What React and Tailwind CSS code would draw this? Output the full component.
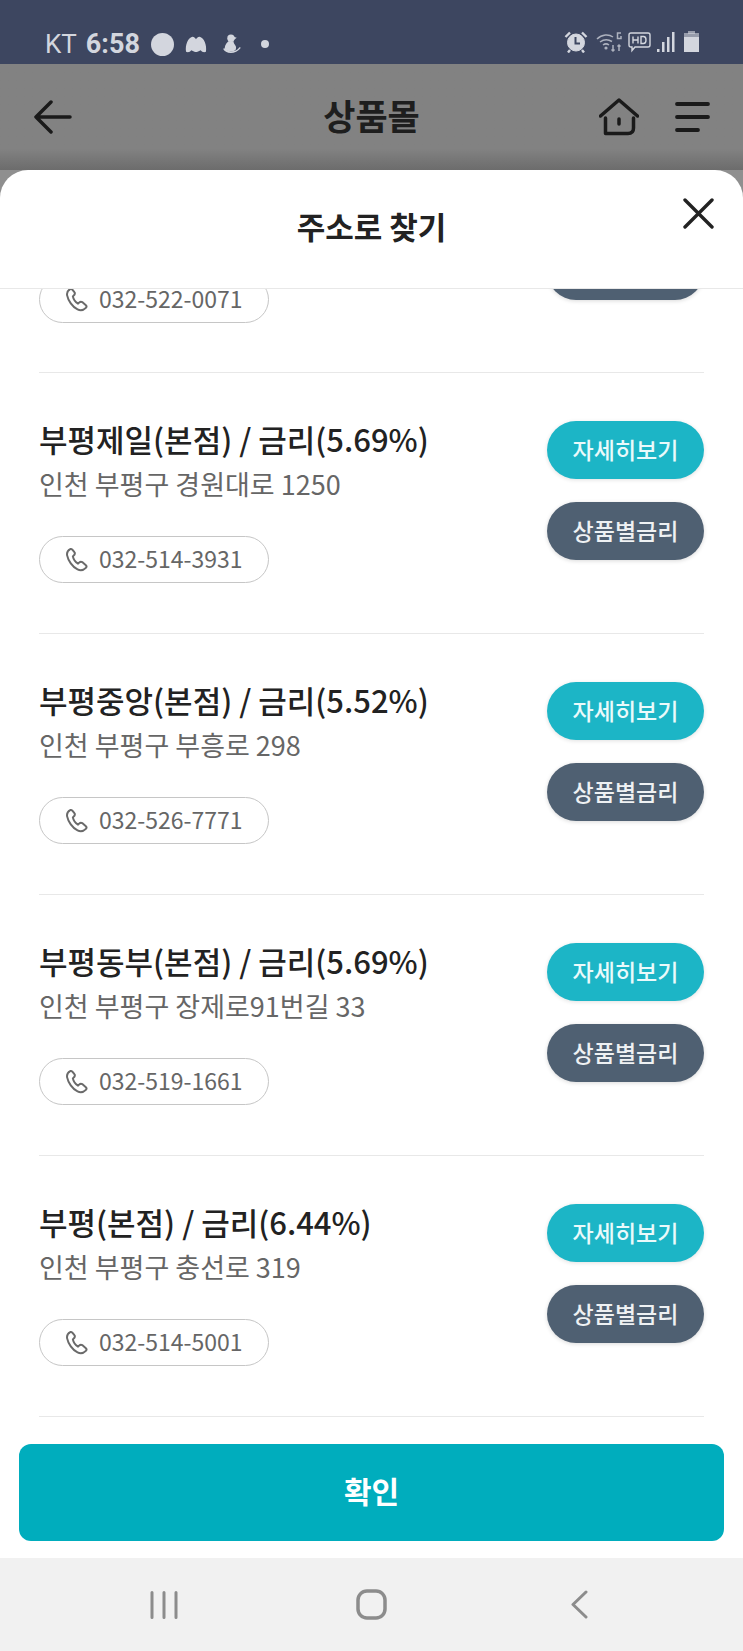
const branches = [
  { title: '부평제일(본점) / 금리(5.69%)', address: '인천 부평구 경원대로 1250', phone: '032-514-3931' },
  { title: '부평중앙(본점) / 금리(5.52%)', address: '인천 부평구 부흥로 298', phone: '032-526-7771' },
  { title: '부평동부(본점) / 금리(5.69%)', address: '인천 부평구 장제로91번길 33', phone: '032-519-1661' },
  { title: '부평(본점) / 금리(6.44%)', address: '인천 부평구 충선로 319', phone: '032-514-5001' },
];

function PhoneIcon() {
  return (
    <svg width="25" height="25" viewBox="0 0 24 24" fill="none" stroke="#6a6a6a" strokeWidth="1.900" strokeLinejoin="round" className="shrink-0">
      <path d="M6 2C4 3 2.500 5 3 8C4 13 8 19 13 21.500C16 23 19 22 21 20C22 19 21.500 18 21 17.500L17.500 14.500C16.500 13.800 15.500 14 14.500 15L13.500 16C11 14.500 9 11.500 8.500 9L10 7.500C10.500 6.500 10.500 5.500 10 5L8 2.500C7.500 2 6.800 1.800 6 2Z" />
    </svg>
  );
}

function PhonePill({ phone }) {
  return (
    <div className="flex h-[47px] w-[230px] items-center gap-[10px] rounded-full border border-[#c6c6c6] pl-[24px] text-[#666666]">
      <PhoneIcon />
      <span className="pb-[3px] text-[23px]">{phone}</span>
    </div>
  );
}

function DarkButton() {
  return (
    <button className="flex h-[58px] w-[157px] items-center justify-center rounded-full bg-[#4f6072] pb-[2px] text-[23px] font-medium text-[#eef1f3] shadow-[0_1px_4px_rgba(0,0,0,0.15)]">
      상품별금리
    </button>
  );
}

function BranchRow({ branch }) {
  return (
    <div className="mx-[39px] flex h-[261px] justify-between border-b border-[#e8e8e8] pt-[48px]">
      <div className="flex flex-col">
        <h3 className="-mt-[2px] h-[40px] text-[31px] leading-[40px] font-medium text-[#222222]">{branch.title}</h3>
        <p className="mt-[7px] text-[27px] leading-[36px] text-[#666666]">{branch.address}</p>
        <div className="mt-[34px]">
          <PhonePill phone={branch.phone} />
        </div>
      </div>
      <div className="flex flex-col gap-[23px]">
        <button className="flex h-[58px] w-[157px] items-center justify-center rounded-full bg-[#1cb5c6] pb-[2px] text-[23px] font-medium text-[#eafafb] shadow-[0_1px_4px_rgba(0,0,0,0.12)]">
          자세히보기
        </button>
        <DarkButton />
      </div>
    </div>
  );
}

function StatusIcons() {
  return (
    <div className="mb-[4px] flex items-center text-[#d3d6de]">
      {/* alarm */}
      <svg width="24" height="22" viewBox="0 0 24 22" fill="none" stroke="currentColor">
        <circle cx="12" cy="11.500" r="8.500" fill="currentColor" />
        <path d="M11.500 6V12.500H16" stroke="#3d4660" strokeWidth="2" />
        <path d="M1.500 6 6 1.500M22.500 6 18 1.500M6 19 4 21.500M18 19 20 21.500" strokeWidth="2.400" />
      </svg>
      {/* wifi */}
      <svg width="27" height="22" viewBox="0 0 27 22" fill="none" stroke="currentColor" strokeWidth="1.500" className="ml-[8px] opacity-75">
        <path d="M1 8C6 3 13 3 17 6M4 11C8 8 12 8 16 10.500M7 14C9 12.500 11 12.500 13 14" />
        <circle cx="10" cy="17" r="1.600" fill="currentColor" stroke="none" />
        <path d="M17 14V20M15.500 18.500 17 20 18.500 18.500M23 20V14M21.500 15.500 23 14 24.500 15.500" />
        <path d="M25 2H21.500V7.500H25V5" />
      </svg>
      {/* hd voice */}
      <svg width="23" height="22" viewBox="0 0 23 22" fill="none" stroke="currentColor" strokeWidth="1.400" className="ml-[5px]">
        <path d="M3 2H20Q22 2 22 4V14Q22 16 20 16H7L4 19.500V16H3Q1 16 1 14V4Q1 2 3 2Z" />
        <path d="M5 5.500V12.500M10 5.500V12.500M5 9H10M13 5.500V12.500H15.500Q18 12.500 18 9T15.500 5.500Z" />
      </svg>
      {/* signal */}
      <svg width="18" height="20" viewBox="0 0 18 20" fill="currentColor" className="ml-[6px]">
        <rect x="0" y="17" width="2.500" height="3" />
        <rect x="5" y="10" width="2.500" height="10" />
        <rect x="10" y="5" width="2.500" height="15" />
        <rect x="15" y="0" width="2.500" height="20" />
      </svg>
      {/* battery */}
      <svg width="15" height="22" viewBox="0 0 15 22" fill="currentColor" className="ml-[9px]">
        <rect x="4" y="0" width="7" height="3" opacity="0.6" />
        <rect x="0" y="2" width="15" height="4" opacity="0.6" />
        <rect x="0" y="6" width="15" height="15" />
      </svg>
    </div>
  );
}

export default function App() {
  return (
    <div className="flex h-[1651px] w-[743px] flex-col overflow-hidden bg-[#8f8f8f] font-['Noto_Sans_CJK_KR','Noto_Sans',sans-serif]">
      {/* Status bar */}
      <div className="flex h-[64px] shrink-0 items-center justify-between bg-[#3d4660] pt-[24px] pr-[44px] pl-[45px] text-[#d3d6de]">
        <div className="flex items-center font-['Roboto',sans-serif]">
          <span className="text-[26px] leading-none">KT</span>
          <span className="ml-[9px] text-[27px] leading-none font-bold">6:58</span>
          <span className="ml-[11px] h-[23px] w-[23px] rounded-full bg-[#d3d6de]" />
          <svg width="22" height="17" viewBox="0 0 21 16" fill="currentColor" className="ml-[11px]">
            <path d="M1 15C0 8 3 1.500 7 0.500C9 0.500 10 2 10.500 3C11 2 12 0.500 14 0.500C18 1.500 21 8 20 15C18 16 16 15 15 13.500L13 14.500C12 15.500 9 15.500 8 14.500L6 13.500C5 15 3 16 1 15Z" />
          </svg>
          <svg width="20" height="21" viewBox="0 0 19 20" fill="currentColor" className="ml-[15px]">
            <circle cx="8.500" cy="4" r="3.500" />
            <path d="M11 2.500 14 3.500 11.500 5.500Z" />
            <path d="M6 7H11C11 9 12 10 13 11.500C13.500 12.500 13.500 14 13 15C11 17 5 17 3 14.500C2 13 3 10 6 7Z" />
            <path d="M1 14C3 19 13 20 18 13L16.500 12.500C14 17 7 18 2.500 13.500Z" />
          </svg>
          <span className="ml-[19px] h-[8px] w-[8px] rounded-full bg-[#d3d6de]" />
        </div>
        <StatusIcons />
      </div>

      {/* App bar */}
      <div className="flex h-[106px] shrink-0 items-center justify-between bg-gradient-to-b from-[#828282] from-[80%] to-[#6c6c6c] pr-[33px] pl-[34px]">
        <svg width="38" height="34" viewBox="0 0 38 34" fill="none" stroke="#1a1a1a" strokeWidth="3.500" strokeLinecap="round" strokeLinejoin="round">
          <path d="M36 17H2M17 2 2 17 17 32" />
        </svg>
        <h1 className="ml-[72px] pb-[3px] text-[35px] font-bold text-[#1e1e1e]">상품몰</h1>
        <div className="flex items-center gap-[36px]">
          <svg width="40" height="38" viewBox="0 0 40 38" fill="none" stroke="#1a1a1a" strokeWidth="3.500" strokeLinecap="round" strokeLinejoin="round">
            <path d="M1.500 18 20 2 38.500 18" />
            <path d="M6.500 20V35.500H29Q34.500 35.500 34.500 30V20" />
            <path d="M20 21V26" />
          </svg>
          <svg width="35" height="32" viewBox="0 0 35 32" fill="none" stroke="#1a1a1a" strokeWidth="3.800" strokeLinecap="round">
            <path d="M2 3H33M2 16H33M2 29H23" />
          </svg>
        </div>
      </div>

      {/* Bottom sheet */}
      <div className="flex min-h-0 flex-1 flex-col rounded-t-[28px] bg-white">
        <div className="relative flex h-[119px] shrink-0 items-center justify-center border-b border-[#e8e8e8] pb-[6px]">
          <h2 className="text-[31px] font-bold text-[#222222]">주소로 찾기</h2>
          <button className="absolute top-[28px] right-[29px]">
            <svg width="31" height="31" viewBox="0 0 31 31" fill="none" stroke="#222222" strokeWidth="3.400" strokeLinecap="round">
              <path d="M2 2 29 29M29 2 2 29" />
            </svg>
          </button>
        </div>

        <div className="min-h-0 flex-1 overflow-hidden">
          {/* previous row, scrolled mostly out of view */}
          <div className="mx-[39px] -mt-[47px] flex items-end justify-between border-b border-[#e8e8e8] pb-[49px]">
            <PhonePill phone="032-522-0071" />
            <div className="mb-[23px]">
              <DarkButton />
            </div>
          </div>
          {branches.map((b) => (
            <BranchRow key={b.phone} branch={b} />
          ))}
        </div>

        <div className="shrink-0 px-[19px] pt-[27px] pb-[17px]">
          <button className="flex h-[97px] w-full items-center justify-center rounded-[12px] bg-[#00adbd] pb-[5px] text-[30px] font-bold text-white">
            확인
          </button>
        </div>
      </div>

      {/* Nav bar */}
      <div className="grid h-[93px] shrink-0 grid-cols-[208px_208px_208px] items-center justify-center bg-[#f1f1f1]">
        <svg width="28" height="28" viewBox="0 0 28 28" fill="none" stroke="#8c8c8c" strokeWidth="3" strokeLinecap="round" className="mx-auto">
          <path d="M2 1.500V26.500M14 1.500V26.500M26 1.500V26.500" />
        </svg>
        <svg width="31" height="31" viewBox="0 0 31 31" fill="none" stroke="#8c8c8c" strokeWidth="3.500" className="mx-auto">
          <rect x="2" y="2" width="27" height="27" rx="9" />
        </svg>
        <svg width="17" height="29" viewBox="0 0 17 29" fill="none" stroke="#8c8c8c" strokeWidth="3" strokeLinecap="round" strokeLinejoin="round" className="mx-auto">
          <path d="M15 2 2 14.500 15 27" />
        </svg>
      </div>
    </div>
  );
}
